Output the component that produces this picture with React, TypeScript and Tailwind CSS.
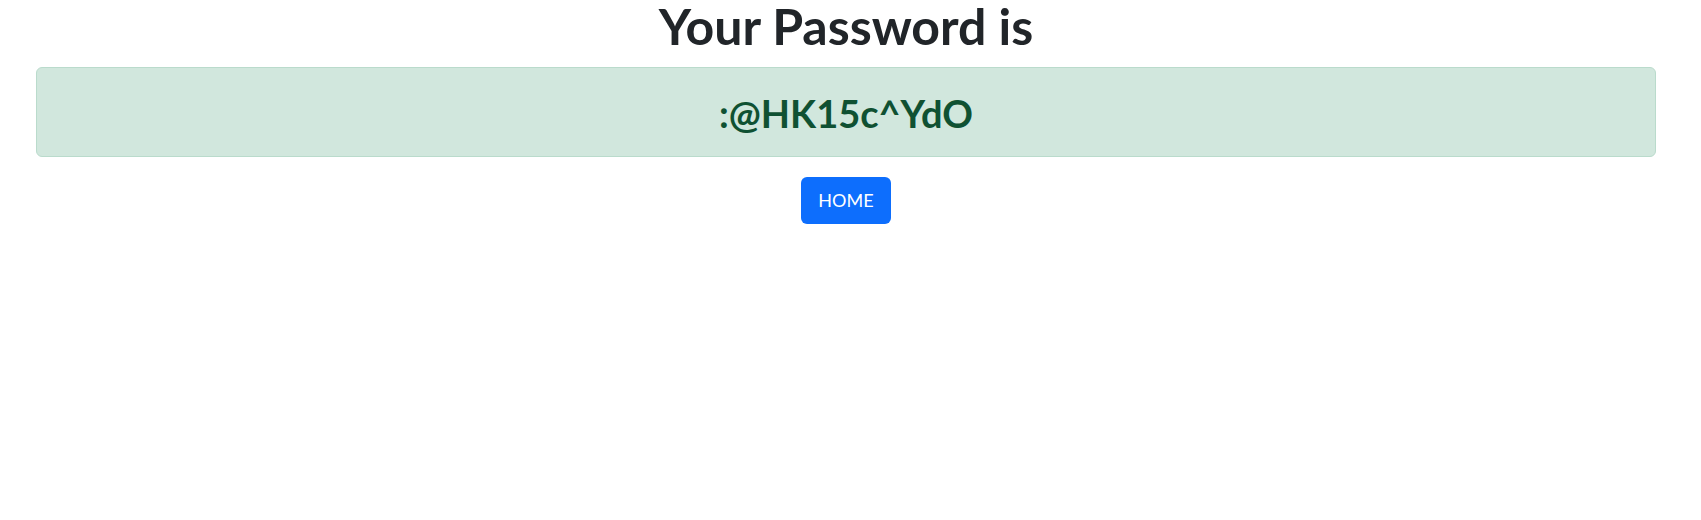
export default function App(): JSX.Element {
  return (
    <div className="min-h-[520px] bg-white pl-[36px] pr-[45px] text-center font-['Lato',sans-serif]">
      <h1 className="text-[50px] leading-[53px] font-bold text-[#212529]">Your Password is</h1>
      <div className="mt-[14px] rounded-[6px] border border-[#badbcc] bg-[#d1e7dd] pt-[23px] pb-[21px]">
        <h2 className="text-[38px] leading-[44px] font-bold text-[#0f5132]">:@HK15c^YdO</h2>
      </div>
      <div className="mt-[20px] flex justify-center">
        <a
          href="#"
          className="flex h-[47px] w-[90px] items-center justify-center rounded-[6px] bg-[#0d6efd] text-[18px] text-white"
        >
          HOME
        </a>
      </div>
    </div>
  );
}
